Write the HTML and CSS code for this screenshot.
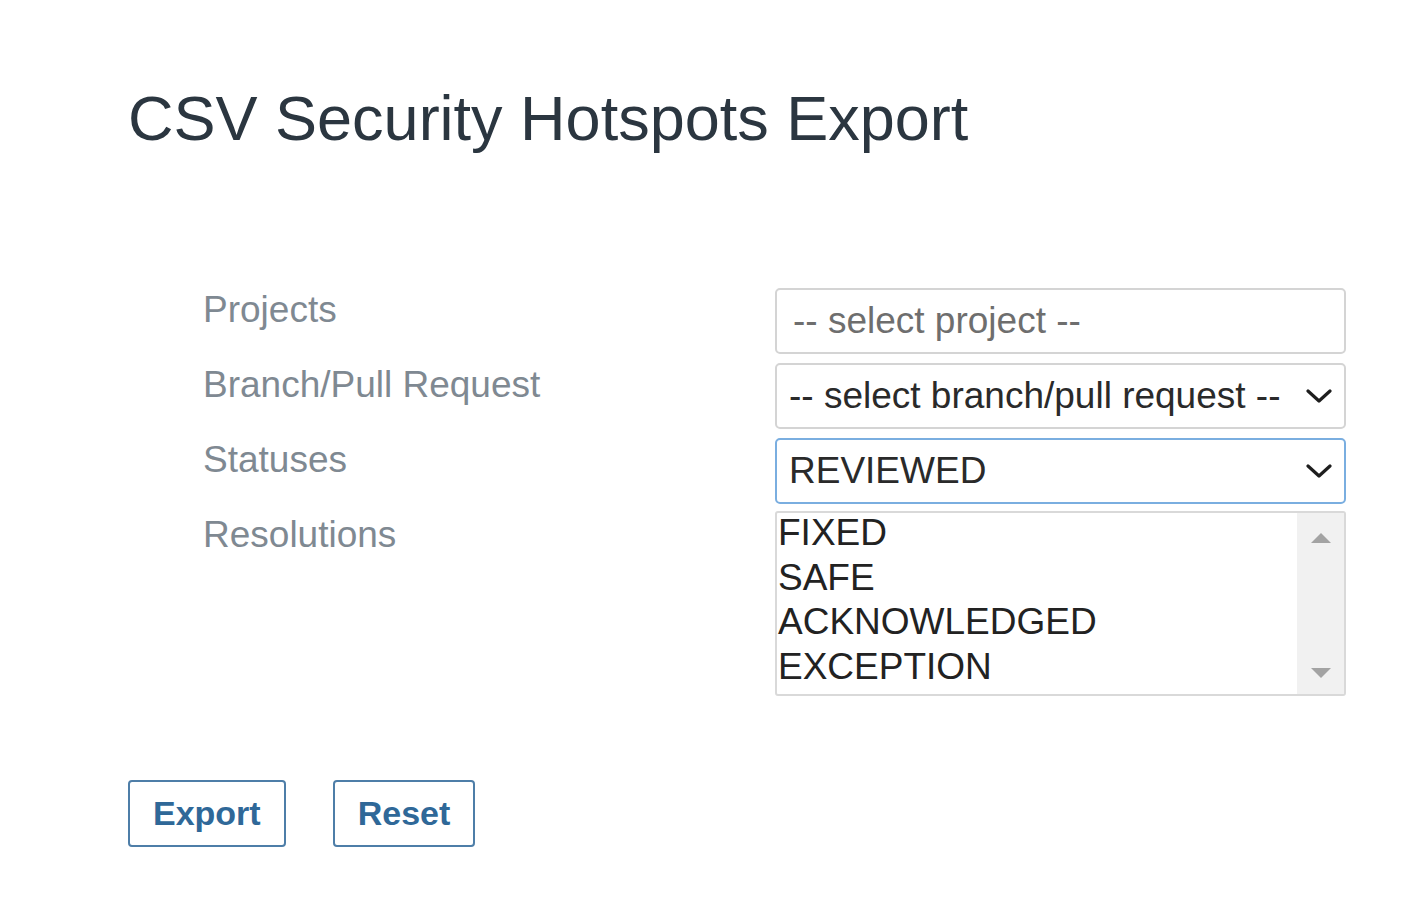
FILE: index.html
```html
<!DOCTYPE html>
<html lang="en">
<head>
<meta charset="utf-8">
<title>CSV Security Hotspots Export</title>
<link rel="stylesheet" href="styles.css">
</head>
<body>
<main class="page">
  <h1 class="title">CSV Security Hotspots Export</h1>
  <form class="form">
    <div class="row">
      <label class="label">Projects</label>
      <div class="control field placeholder pad-wide">-- select project --</div>
    </div>
    <div class="row">
      <label class="label">Branch/Pull Request</label>
      <div class="control field dropdown">
        <span>-- select branch/pull request --</span>
        <svg class="chev" viewBox="0 0 26 14" aria-hidden="true"><path d="M2 2 L13 12 L24 2" fill="none" stroke="#1e1e1e" stroke-width="3.2" stroke-linecap="round" stroke-linejoin="round"/></svg>
      </div>
    </div>
    <div class="row">
      <label class="label">Statuses</label>
      <div class="control field dropdown focused">
        <span>REVIEWED</span>
        <svg class="chev" viewBox="0 0 26 14" aria-hidden="true"><path d="M2 2 L13 12 L24 2" fill="none" stroke="#1e1e1e" stroke-width="3.2" stroke-linecap="round" stroke-linejoin="round"/></svg>
      </div>
    </div>
    <div class="row">
      <label class="label">Resolutions</label>
      <div class="control listbox">
        <ul class="options">
          <li>FIXED</li>
          <li>SAFE</li>
          <li>ACKNOWLEDGED</li>
          <li>EXCEPTION</li>
        </ul>
        <div class="scrollbar">
          <svg class="arrow" viewBox="0 0 20 10" aria-hidden="true"><path d="M0 10 L10 0 L20 10 Z" fill="#a3a3a3"/></svg>
          <svg class="arrow" viewBox="0 0 20 10" aria-hidden="true"><path d="M0 0 L20 0 L10 10 Z" fill="#a3a3a3"/></svg>
        </div>
      </div>
    </div>
  </form>
  <div class="actions">
    <button class="btn" type="button">Export</button>
    <button class="btn" type="button">Reset</button>
  </div>
</main>
</body>
</html>
```

FILE: styles.css
```css
html, body {
  margin: 0;
  padding: 0;
  background: #ffffff;
}

body {
  font-family: "Liberation Sans", Arial, sans-serif;
  color: #333333;
}

.page {
  padding: 84px 0 0 128px;
}

.title {
  margin: 0;
  font-size: 63px;
  line-height: 1.1;
  font-weight: 400;
  color: #2b3640;
}

.form {
  margin-top: 135px;
  padding-left: 75px;
  display: flex;
  flex-direction: column;
  gap: 9px;
}

.row {
  display: grid;
  grid-template-columns: 572px 571px;
  align-items: start;
}

.label {
  font-size: 37px;
  line-height: 53px;
  margin-top: -5px;
  color: #7f8992;
}

.field {
  box-sizing: border-box;
  height: 66px;
  border: 2px solid #d4d4d4;
  border-radius: 5px;
  display: flex;
  align-items: center;
  font-size: 37px;
  padding: 0 12px;
  color: #2a2a2a;
  background: #ffffff;
}

.pad-wide {
  padding-left: 16px;
}

.placeholder {
  color: #6e6e6e;
}

.dropdown {
  justify-content: space-between;
  padding-right: 12px;
}

.focused {
  border-color: #7aaee0;
}

.chev {
  width: 26px;
  height: 14px;
  flex: none;
}

.listbox {
  box-sizing: border-box;
  height: 185px;
  margin-top: -2px;
  border: 2px solid #d9d9d9;
  border-radius: 3px;
  display: flex;
  background: #ffffff;
}

.options {
  list-style: none;
  margin: -2px 0 0;
  padding: 0 0 0 1px;
  flex: 1;
  font-size: 37px;
  line-height: 44.5px;
  color: #222222;
}

.scrollbar {
  width: 47px;
  background: #f1f1f1;
  display: flex;
  flex-direction: column;
  justify-content: space-between;
  align-items: center;
  padding: 20px 0 16px;
}

.arrow {
  width: 20px;
  height: 10px;
}

.actions {
  margin-top: 84px;
  display: flex;
  gap: 47px;
}

.btn {
  box-sizing: border-box;
  height: 67px;
  padding: 0 23px;
  border: 2px solid #4e7ea8;
  border-radius: 4px;
  background: #ffffff;
  font-family: "Liberation Sans", Arial, sans-serif;
  font-weight: 700;
  font-size: 34px;
  color: #2f6898;
}
```
